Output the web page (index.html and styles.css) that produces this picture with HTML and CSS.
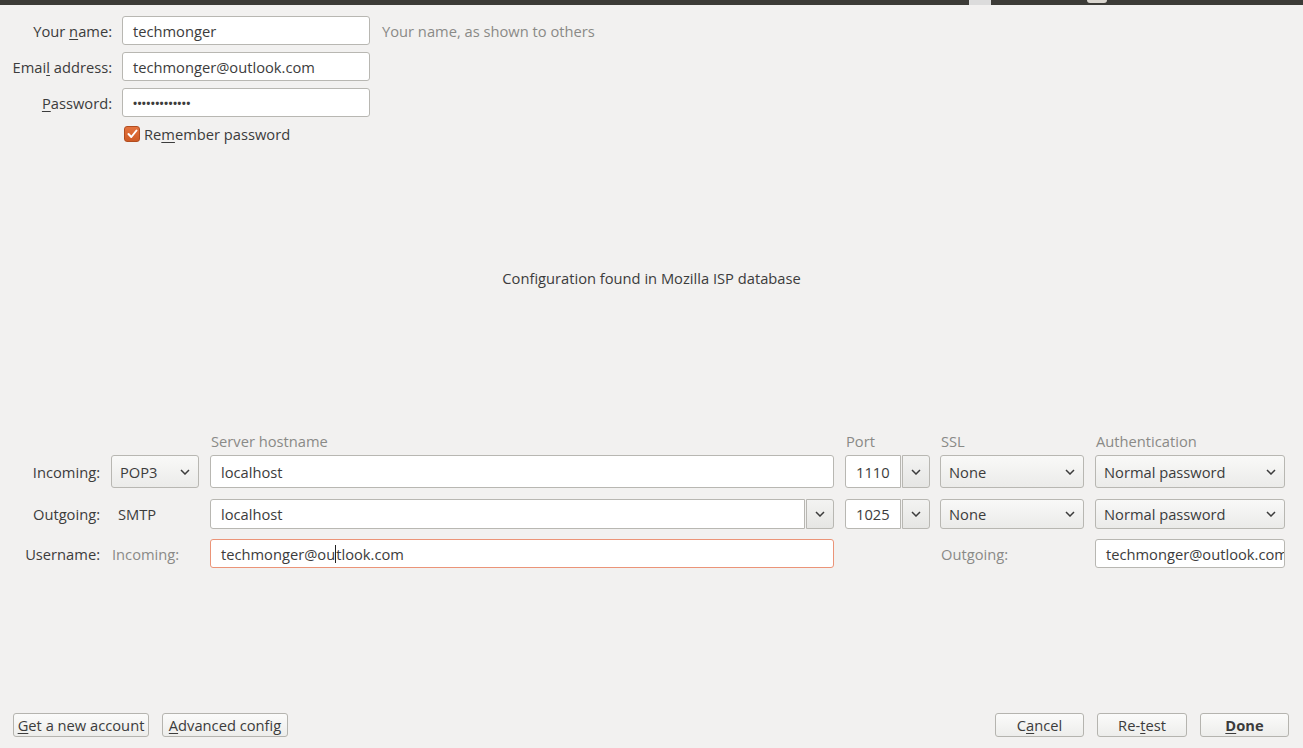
FILE: index.html
```html
<!DOCTYPE html>
<html lang="en">
<head>
<meta charset="utf-8">
<title>Mail Account Setup</title>
<link rel="stylesheet" href="styles.css">
</head>
<body>
<div class="topbar">
  <span class="tb-tab"></span>
  <span class="tb-pill"></span>
</div>

<div class="identity">
  <label class="lbl"><span>Your <u>n</u>ame:</span></label>
  <div class="input">techmonger</div>
  <div class="hint">Your name, as shown to others</div>

  <label class="lbl"><span>Emai<u>l</u> address:</span></label>
  <div class="input">techmonger@outlook.com</div>
  <div></div>

  <label class="lbl"><span><u>P</u>assword:</span></label>
  <div class="input pw">&bull;&bull;&bull;&bull;&bull;&bull;&bull;&bull;&bull;&bull;&bull;&bull;&bull;</div>
  <div></div>

  <div></div>
  <div class="check-row">
    <span class="checkbox">
      <svg width="11" height="10" viewBox="0 0 11 10"><polyline points="1.5,5 4.3,8 9.5,1.5" fill="none" stroke="#fff" stroke-width="2" stroke-linecap="round" stroke-linejoin="round"/></svg>
    </span>
    <span>Re<u>m</u>ember password</span>
  </div>
</div>

<div class="status">Configuration found in Mozilla ISP database</div>

<div class="servers">
  <div></div>
  <div></div>
  <div class="head">Server hostname</div>
  <div class="head">Port</div>
  <div class="head">SSL</div>
  <div class="head">Authentication</div>

  <div class="rlbl tall">Incoming:</div>
  <div class="select tall"><span>POP3</span><svg class="chev" width="10" height="6" viewBox="0 0 10 6"><polyline points="1,1 5,5 9,1" fill="none" stroke="#3c3c3c" stroke-width="1.5"/></svg></div>
  <div class="input tall">localhost</div>
  <div class="combo tall"><div class="input port">1110</div><div class="dbtn"><svg width="10" height="6" viewBox="0 0 10 6"><polyline points="1,1 5,5 9,1" fill="none" stroke="#3c3c3c" stroke-width="1.5"/></svg></div></div>
  <div class="select tall"><span>None</span><svg class="chev" width="10" height="6" viewBox="0 0 10 6"><polyline points="1,1 5,5 9,1" fill="none" stroke="#3c3c3c" stroke-width="1.5"/></svg></div>
  <div class="select tall"><span>Normal password</span><svg class="chev" width="10" height="6" viewBox="0 0 10 6"><polyline points="1,1 5,5 9,1" fill="none" stroke="#3c3c3c" stroke-width="1.5"/></svg></div>

  <div class="rlbl mid">Outgoing:</div>
  <div class="plain mid">SMTP</div>
  <div class="combo mid"><div class="input">localhost</div><div class="dbtn"><svg width="10" height="6" viewBox="0 0 10 6"><polyline points="1,1 5,5 9,1" fill="none" stroke="#3c3c3c" stroke-width="1.5"/></svg></div></div>
  <div class="combo mid"><div class="input port">1025</div><div class="dbtn"><svg width="10" height="6" viewBox="0 0 10 6"><polyline points="1,1 5,5 9,1" fill="none" stroke="#3c3c3c" stroke-width="1.5"/></svg></div></div>
  <div class="select mid"><span>None</span><svg class="chev" width="10" height="6" viewBox="0 0 10 6"><polyline points="1,1 5,5 9,1" fill="none" stroke="#3c3c3c" stroke-width="1.5"/></svg></div>
  <div class="select mid"><span>Normal password</span><svg class="chev" width="10" height="6" viewBox="0 0 10 6"><polyline points="1,1 5,5 9,1" fill="none" stroke="#3c3c3c" stroke-width="1.5"/></svg></div>

  <div class="rlbl low">Username:</div>
  <div class="plain muted low">Incoming:</div>
  <div class="input low focus"><span>techmonger@ou</span><span class="caret"></span><span>tlook.com</span></div>
  <div></div>
  <div class="plain muted low">Outgoing:</div>
  <div class="input low clip">techmonger@outlook.com</div>
</div>

<div class="footer">
  <div class="btn btn-new"><span><u>G</u>et a new account</span></div>
  <div class="btn btn-adv"><span><u>A</u>dvanced config</span></div>
  <div class="spacer"></div>
  <div class="btn btn-cancel"><span>C<u>a</u>ncel</span></div>
  <div class="btn btn-retest"><span>Re-<u>t</u>est</span></div>
  <div class="btn btn-done"><span><u>D</u>one</span></div>
</div>
</body>
</html>
```

FILE: styles.css
```css
* { box-sizing: border-box; }

html, body {
  margin: 0;
  padding: 0;
}

body {
  width: 1303px;
  height: 748px;
  overflow: hidden;
  background: #f2f1f0;
  color: #3c3c3c;
  font-family: "Open Sans", "DejaVu Sans", sans-serif;
  font-size: 14.7px;
  display: flex;
  flex-direction: column;
}

u { text-decoration: underline; text-underline-offset: 2px; }

.topbar {
  height: 5px;
  flex: 0 0 5px;
  background: #3c3b37;
  display: flex;
}
.tb-tab {
  width: 22px;
  height: 5px;
  margin-left: 969px;
  background: #dcdcdc;
}
.tb-pill {
  width: 20px;
  height: 3px;
  margin-left: 96px;
  background: #dad6cf;
  border-radius: 0 0 4px 4px;
}

/* identity block */
.identity {
  margin-top: 11px;
  display: grid;
  grid-template-columns: 112px 248px auto;
  grid-template-rows: 29px 29px 29px 20px;
  column-gap: 10px;
  row-gap: 7px;
}
.lbl {
  display: flex;
  align-items: center;
  justify-content: flex-end;
  white-space: nowrap;
}
.input {
  height: 29px;
  background: #fff;
  border: 1px solid #b8b7b2;
  border-radius: 3px;
  padding: 0 10px;
  display: flex;
  align-items: center;
  white-space: pre;
  overflow: hidden;
}
.pw {
  font-size: 11px;
  letter-spacing: 0.3px;
  font-weight: bold;
}
.hint {
  display: flex;
  align-items: center;
  color: #8a8a87;
  padding-left: 2px;
}
.check-row {
  grid-column: 2 / span 2;
  height: 20px;
  display: flex;
  align-items: center;
  gap: 4px;
  padding-left: 2px;
}
.checkbox {
  width: 16px;
  height: 16px;
  border-radius: 3px;
  background: linear-gradient(#e4733e, #cf5b26);
  border: 1px solid #b24d1f;
  display: flex;
  align-items: center;
  justify-content: center;
}

/* status */
.status {
  margin-top: 124px;
  text-align: center;
  line-height: 20px;
  height: 20px;
}

/* servers grid */
.servers {
  margin-top: 145px;
  display: grid;
  grid-template-columns: 100px 88px 624px 84px 144px 190px;
  grid-template-rows: 22px 44px 40px 29px;
  column-gap: 11px;
  align-items: start;
}
.head {
  color: #8a8a87;
  line-height: 17px;
  padding-left: 1px;
}
.tall { height: 33px; }
.mid { height: 30px; }
.low { height: 29px; }

.rlbl {
  display: flex;
  align-items: center;
  justify-content: flex-end;
  white-space: nowrap;
}
.plain {
  display: flex;
  align-items: center;
  white-space: nowrap;
  padding-left: 7px;
}
.muted {
  color: #8a8a87;
  padding-left: 1px;
}
.select {
  background: linear-gradient(#f9f9f8, #ebebe9);
  border: 1px solid #b8b7b2;
  border-radius: 3px;
  padding: 0 8px 0 8px;
  display: flex;
  align-items: center;
  justify-content: space-between;
  white-space: nowrap;
}
.combo {
  display: flex;
  gap: 1px;
}
.combo .input { height: 100%; flex: 1; border-radius: 3px 0 0 3px; }
.combo .port { flex: 0 0 56px; }
.dbtn {
  flex: 0 0 28px;
  height: 100%;
  background: linear-gradient(#f3f3f2, #e6e6e4);
  border: 1px solid #b8b7b2;
  border-radius: 0 3px 3px 0;
  display: flex;
  align-items: center;
  justify-content: center;
}
.focus {
  border-color: #eb9478;
}
.caret {
  display: inline-block;
  width: 1px;
  height: 18px;
  background: #222;
}
.clip {
  padding-right: 0;
}

/* footer */
.footer {
  margin-top: auto;
  padding: 0 14px 11px 13px;
  display: flex;
  gap: 13px;
}
.spacer { flex: 1; }
.btn {
  height: 24px;
  border: 1px solid #b5b4af;
  border-radius: 3px;
  background: linear-gradient(#fbfbfa, #ededeb);
  display: flex;
  align-items: center;
  justify-content: center;
  padding: 0 4px;
  white-space: nowrap;
}
.btn-new { width: 136px; }
.btn-adv { width: 126px; }
.btn-cancel { width: 89px; }
.btn-retest { width: 90px; }
.btn-done { width: 89px; font-weight: bold; }
```
